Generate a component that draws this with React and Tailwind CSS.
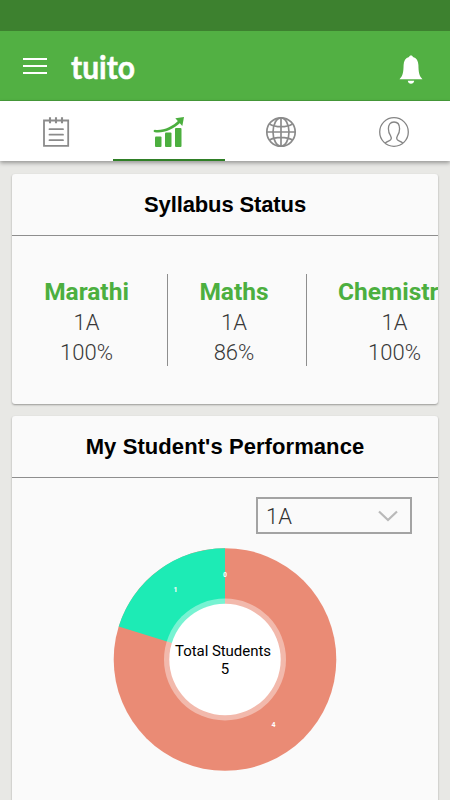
const subjects = [
  { name: 'Marathi',   grade: '1A', progress: '100%', cls: 'w-[156px] pl-8 border-r', width: 'w-[85px]' },
  { name: 'Maths',     grade: '1A', progress: '86%',  cls: 'w-[139px] pl-8 border-r', width: 'w-[68px]' },
  { name: 'Chemistry', grade: '1A', progress: '100%', cls: 'w-[160px] pl-[31px]', width: 'w-[113px]' },
]

function NotesIcon() {
  return (
    <svg width="30" height="34" viewBox="0 0 30 34" fill="none" stroke="#8b8b8b" strokeWidth="1.800">
      <path d="M3 5.500h24.200v25.300H3z" />
      <path d="M9 2.200v6M15 2.200v6M21 2.200v6" strokeWidth="2.100" />
      <path d="M8.500 14.200h13.500M8.500 19.700h13.500M8.500 25.200h13.500" strokeLinecap="round" />
    </svg>
  )
}

function ChartIcon() {
  return (
    <svg width="32" height="32" viewBox="0 0 32 32" fill="#4caf3f">
      <rect x="2" y="20.500" width="6.500" height="10.500" rx="1" />
      <rect x="12" y="16.500" width="6.500" height="14.500" rx="1" />
      <rect x="22" y="12" width="6.500" height="19" rx="1" />
      <path d="M1.800 13.800C10 15 19.500 10.500 25.800 4.200l2 2C20.500 13.700 10 17.500 1.800 16.200c-1.600-.3-1.600-2.300 0-2.400z" />
      <path d="M22.300 2.300L31 1l-1.700 9z" />
    </svg>
  )
}

function GlobeIcon() {
  return (
    <svg width="32" height="32" viewBox="0 0 32 32" fill="none" stroke="#8b8b8b" strokeWidth="1.700">
      <circle cx="16" cy="16" r="14.200" />
      <ellipse cx="16" cy="16" rx="8" ry="14.200" />
      <path d="M16 2v28M2 16h28M4.500 8c3 1.800 7 2.700 11.500 2.700S24.500 9.800 27.500 8M4.500 24c3-1.800 7-2.700 11.500-2.700s8.500.9 11.500 2.700" />
    </svg>
  )
}

function UserIcon() {
  return (
    <svg width="32" height="32" viewBox="0 0 32 32" fill="none" stroke="#858585" strokeWidth="1.300">
      <circle cx="16" cy="16" r="14.300" />
      <path d="M7.200 27.200c1.700-2 4.800-2.200 5.700-3.700.7-1.200.4-2.500-.3-3.700-1.500-2-2.200-4.200-2.200-7C10.400 8.500 12.200 6 16 6s5.600 2.500 5.600 6.800c0 2.800-.7 5-2.200 7-.7 1.200-1 2.500-.3 3.700.9 1.500 4 1.700 5.700 3.700" />
    </svg>
  )
}

function BellIcon() {
  return (
    <svg width="24" height="30" viewBox="0 0 24 30" fill="#fff">
      <path d="M12 .5c1.100 0 1.800.7 2 1.600 3.500 1 5.300 4 5.400 7.900.2 7 .5 10.500 4.100 14.200H.5C4.100 20.500 4.400 17 4.600 10c.1-3.900 1.900-6.900 5.400-7.900.2-.9.900-1.600 2-1.600z" />
      <path d="M8.800 25.800h6.400c-.2 1.900-1.500 3-3.200 3s-3-1.100-3.200-3z" />
    </svg>
  )
}

const tabs = [
  { id: 'notes',   icon: <NotesIcon /> },
  { id: 'stats',   icon: <ChartIcon />, active: true },
  { id: 'web',     icon: <GlobeIcon /> },
  { id: 'profile', icon: <UserIcon /> },
]

function Header() {
  return (
    <header>
      <div className="h-[31px] bg-[#3d812f]" />
      <div className="flex h-[70px] items-center border-b border-[#479d3b] bg-[#52b043] pl-[23px] pr-[27px]">
        <button className="flex w-6 flex-col gap-[5px]">
          <span className="h-[2px] bg-white" />
          <span className="h-[2px] bg-white" />
          <span className="h-[2px] bg-white" />
        </button>
        <h1 className="ml-6 grow">
          <svg width="80" height="50" viewBox="0 0 80 50" className="block overflow-visible">
            <text x="0" y="37.500" textLength="64" lengthAdjust="spacingAndGlyphs" fill="#fff" stroke="#fff" strokeWidth="0.500" className="font-[Lato] text-[33px] font-bold">tuito</text>
          </svg>
        </h1>
        <span className="mt-[9px]"><BellIcon /></span>
      </div>
    </header>
  )
}

function TabBar() {
  return (
    <nav className="relative flex h-[60px] bg-white shadow-[0_2px_4px_rgba(0,0,0,0.35)]">
      {tabs.map(t => (
        <button key={t.id} className={`flex flex-1 items-center justify-center border-b-2 pt-[3px] ${t.active ? 'border-[#2f7f26]' : 'border-transparent'}`}>
          {t.icon}
        </button>
      ))}
    </nav>
  )
}

function Card({ title, className, titleClass, children }) {
  return (
    <section className={`overflow-hidden rounded-[3px] bg-[#fafafa] shadow-[0_1px_2px_rgba(0,0,0,0.35)] ${className}`}>
      <h2 className={`flex h-[62px] items-center justify-center border-b border-[#8e8e8e] font-['Liberation_Sans'] text-[22px] font-bold text-black ${titleClass}`}>
        {title}
      </h2>
      {children}
    </section>
  )
}

function StudentsChart() {
  return (
    <svg width="224" height="224" viewBox="0 0 224 224" className="mx-auto mt-[14px] block font-[Roboto]">
      <circle cx="112" cy="111.500" r="111.300" fill="#ea8b75" />
      <path d="M112 111.500V.2A111.300 111.300 0 0 0 5.700 78.500z" fill="#1debb5" />
      <circle cx="112" cy="111.500" r="61" fill="#fff" fillOpacity="0.400" />
      <circle cx="112" cy="111.500" r="55.700" fill="#fff" />
      <g fill="#fff" textAnchor="middle" className="text-[7px] font-bold">
        <text x="112" y="28.500">0</text>
        <text x="62.500" y="44">1</text>
        <text x="160.500" y="179">4</text>
      </g>
      <g fill="#000" textAnchor="middle" className="text-[15px]">
        <text x="110" y="108" textLength="96">Total Students</text>
        <text x="112" y="125.500">5</text>
      </g>
    </svg>
  )
}

export default function App() {
  return (
    <div className="h-[800px] w-[450px] overflow-hidden bg-[#e8e8e5] font-[Roboto]">
      <Header />
      <TabBar />
      <main className="flex flex-col gap-3 px-3 pt-[13px]">
        <Card title="Syllabus Status" className="h-[230px]" titleClass="tracking-[-0.12px]">
          <div className="mt-[38px] flex">
            {subjects.map(s => (
              <div key={s.name} className={`h-[92px] shrink-0 border-[#8e8e8e] ${s.cls}`}>
                <div className={`flex flex-col items-center pt-[3px] text-[22px] leading-[30px] font-[350] text-[#383838] ${s.width}`}>
                  <p className="mb-px text-[24.5px] font-bold text-[#4caf3f]">{s.name}</p>
                  <p>{s.grade}</p>
                  <p>{s.progress}</p>
                </div>
              </div>
            ))}
          </div>
        </Card>
        <Card title="My Student's Performance" className="h-[420px]" titleClass="tracking-[0.08px]">
          <div className="mt-[19px] ml-[244px] flex h-[37px] w-[156px] items-center justify-between border-[2.5px] border-[#a3a3a3] px-2 text-[22px] font-[350] text-[#333]">
            <span className="pt-px">1A</span>
            <svg width="20" height="12" viewBox="0 0 20 12" fill="none" stroke="#b9b9b9" strokeWidth="2.200" className="mr-1">
              <path d="M1 1.500l9 8.500 9-8.500" />
            </svg>
          </div>
          <StudentsChart />
        </Card>
      </main>
    </div>
  )
}
